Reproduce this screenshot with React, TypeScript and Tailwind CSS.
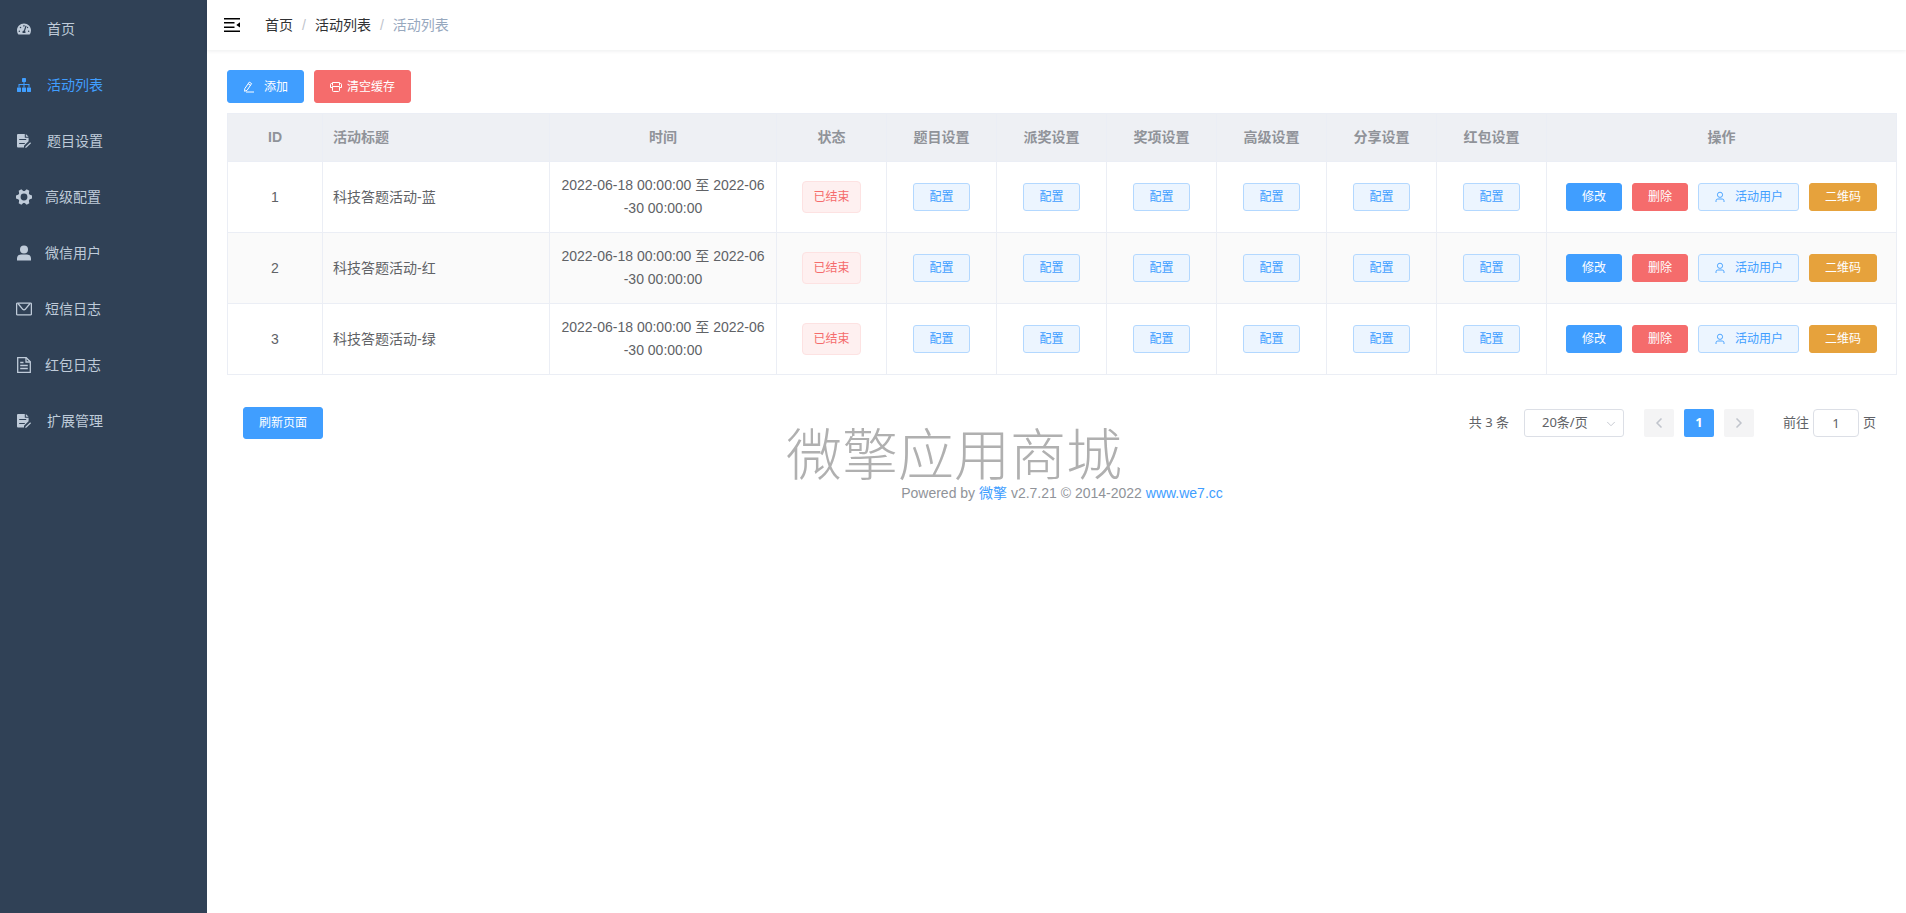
import React from 'react';
import { ChevronDown, ChevronLeft, ChevronRight } from 'lucide-react';
import { FaTachometerAlt } from 'react-icons/fa';

const TreeIcon = () => (
    <svg width="14" height="14" viewBox="0 0 14 14" fill="currentColor">
        <rect x="5" y="0" width="4" height="4" rx="0.4" />
        <path d="M6.500 4h1v2h5v3.500h-1V7h-4v2.500h-1V7h-4v2.500h-1V6h5z" />
        <rect x="0" y="9.500" width="4" height="4.500" rx="0.4" />
        <rect x="5" y="9.500" width="4" height="4.500" rx="0.4" />
        <rect x="10" y="9.500" width="4" height="4.500" rx="0.4" />
    </svg>
);

const FormIcon = () => (
    <svg width="14" height="14" viewBox="0 0 14 14" fill="currentColor">
        <path
            fillRule="evenodd"
            d="M1 0h6.800v3.800h3.800V7.200L7 11.800v1.800H1a1 1 0 0 1-1-1V1a1 1 0 0 1 1-1zM2.200 5v1.100h7V5zM2.200 8.900V10h5.600V8.900z"
        />
        <path d="M8.800 0l2.800 2.800H8.800z" />
        <path d="M13.200 8.300l.8.900-4.400 4.400-1.400.4.300-1.300z" />
    </svg>
);

const GearIcon = () => (
    <svg width="16" height="16" viewBox="0 0 16 16" fill="currentColor">
        <circle cx="8" cy="8" r="4.700" fill="none" stroke="currentColor" strokeWidth="2.600" />
        {[0, 60, 120, 180, 240, 300].map((deg) => (
            <path key={deg} d="M12.500 5.200L16 6.500v3l-3.500 1.300z" transform={`rotate(${deg} 8 8)`} />
        ))}
    </svg>
);

const UserSolidIcon = () => (
    <svg width="14" height="16" viewBox="0 0 14 16" fill="currentColor">
        <circle cx="7" cy="4.500" r="4" />
        <path d="M0 15.500v-2.200a4 4 0 0 1 4-3.800h6a4 4 0 0 1 4 3.800v2.200z" />
    </svg>
);

const MessageIcon = () => (
    <svg width="16" height="14" viewBox="0 0 16 14" fill="none" stroke="currentColor" strokeWidth="1.300">
        <rect x="0.600" y="1.100" width="14.800" height="11.800" rx="1" />
        <path d="M2 1.500l4.800 5.800a1.600 1.600 0 0 0 2.400 0L14 1.500" />
    </svg>
);

const DocumentIcon = () => (
    <svg width="14" height="16" viewBox="0 0 14 16" fill="none" stroke="currentColor" strokeWidth="1.300">
        <path d="M.7.700h8.500l4.100 4.100v10.500H.7z" />
        <path d="M9 .7V5h4.300M3.200 5.500h3.300M3.200 8.500h7.600M3.200 11.500h7.600" />
    </svg>
);

const EditIcon = () => (
    <svg width="12" height="12" viewBox="0 0 12 12" fill="none" stroke="currentColor" strokeWidth="1">
        <path d="M6.300 1.100l2.300 1.500-4.500 6.700-2.500 1 .2-2.700zM5.200 2.800l2.300 1.500M3 11h8" />
    </svg>
);

const ClearIcon = () => (
    <svg width="12" height="12" viewBox="0 0 12 12" fill="none" stroke="currentColor" strokeWidth="1">
        <path d="M2.500 4.500v-3h7v3M2.500 2.500h-1a1 1 0 0 0-1 1v3h2M9.500 2.500h1a1 1 0 0 1 1 1v3h-2" />
        <path d="M2.500 5.500h7v4a1 1 0 0 1-1 1h-5a1 1 0 0 1-1-1z" />
    </svg>
);

const UserIcon = () => (
    <svg width="12" height="12" viewBox="0 0 12 12" fill="none" stroke="currentColor" strokeWidth="0.900">
        <circle cx="6" cy="3.800" r="2.600" />
        <path d="M2 11V9.800A1.800 1.800 0 0 1 3.800 8h4.400A1.800 1.800 0 0 1 10 9.800V11" />
    </svg>
);

const FoldIcon = () => (
    <svg width="16" height="14" viewBox="0 0 16 14" fill="currentColor">
        <path d="M0 0h16v1.500H0zM0 4h10.500v1.500H0zM0 8.400h10.500v1.500H0zM0 12.500h16V14H0zM16 4.200v5.400L12.300 6.900z" />
    </svg>
);

const menu = [
    { label: '首页', icon: <FaTachometerAlt size={14} />, gap: 'gap-[11px]' },
    { label: '活动列表', icon: <TreeIcon />, gap: 'gap-[11px]', active: true },
    { label: '题目设置', icon: <FormIcon />, gap: 'gap-[11px]' },
    { label: '高级配置', icon: <GearIcon />, gap: 'gap-[9px]' },
    { label: '微信用户', icon: <UserSolidIcon />, gap: 'gap-[9px]' },
    { label: '短信日志', icon: <MessageIcon />, gap: 'gap-[9px]' },
    { label: '红包日志', icon: <DocumentIcon />, gap: 'gap-[9px]' },
    { label: '扩展管理', icon: <FormIcon />, gap: 'gap-[11px]' },
];

const settings = ['题目设置', '派奖设置', '奖项设置', '高级设置', '分享设置', '红包设置'];

const rows = [
    { id: 1, title: '科技答题活动-蓝' },
    { id: 2, title: '科技答题活动-红' },
    { id: 3, title: '科技答题活动-绿' },
];

const buttonTypes = {
    primary: 'bg-[#409eff] border-[#409eff] text-white',
    danger: 'bg-[#f56c6c] border-[#f56c6c] text-white',
    warning: 'bg-[#e6a23c] border-[#e6a23c] text-white',
    plain: 'bg-[#ecf5ff] border-[#b3d8ff] text-[#409eff]',
};

interface ButtonProps {
    type: keyof typeof buttonTypes;
    size?: string;
    children: React.ReactNode;
}

function Button({ type, size = 'h-7', children }: ButtonProps) {
    return (
        <button
            type="button"
            className={`inline-flex items-center justify-center border rounded-[3px] px-[15px] text-xs whitespace-nowrap cursor-pointer ${size} ${buttonTypes[type]}`}
        >
            {children}
        </button>
    );
}

function Sidebar() {
    return (
        <aside className="w-[207px] shrink-0 bg-[#304156]">
            <nav className="pt-px">
                {menu.map((item) => (
                    <a
                        key={item.label}
                        href="#"
                        className={`flex items-center h-14 pl-3 text-sm ${item.gap} ${item.active ? 'text-[#409eff]' : 'text-[#bfcbd9]'}`}
                    >
                        <span className="w-6 flex justify-center">{item.icon}</span>
                        <span>{item.label}</span>
                    </a>
                ))}
            </nav>
        </aside>
    );
}

function Navbar() {
    return (
        <header className="flex items-center h-[50px] pl-[17px] shadow-[0_1px_4px_rgba(0,21,41,0.08)]">
            <button type="button" aria-label="收起菜单" className="text-black cursor-pointer">
                <FoldIcon />
            </button>
            <nav className="flex items-center gap-[9px] ml-[25px] text-sm text-[#303133]">
                <a href="#">首页</a>
                <span className="text-[#c0c4cc]">/</span>
                <a href="#">活动列表</a>
                <span className="text-[#c0c4cc]">/</span>
                <span className="text-[#97a8be]">活动列表</span>
            </nav>
        </header>
    );
}

function ActivityTable() {
    const th = 'h-12 px-2.5 border-r border-b border-[#ebeef5] font-bold';
    const td = 'h-[71px] px-2.5 border-r border-b border-[#ebeef5]';

    return (
        <table className="w-full mt-2.5 table-fixed border-separate border-spacing-0 border-l border-t border-[#ebeef5] text-sm leading-[23px] text-center text-[#606266]">
            <colgroup>
                <col className="w-[95px]" />
                <col />
                <col />
                <col className="w-[110px]" />
                {settings.map((name) => (
                    <col key={name} className="w-[110px]" />
                ))}
                <col className="w-[350px]" />
            </colgroup>
            <thead className="bg-[#eef0f4] text-[#909399]">
                <tr>
                    <th className={th}>ID</th>
                    <th className={`${th} text-left`}>活动标题</th>
                    <th className={th}>时间</th>
                    <th className={th}>状态</th>
                    {settings.map((name) => (
                        <th key={name} className={th}>{name}</th>
                    ))}
                    <th className={th}>操作</th>
                </tr>
            </thead>
            <tbody>
                {rows.map((row) => (
                    <tr key={row.id} className="even:bg-[#fafafa]">
                        <td className={td}>{row.id}</td>
                        <td className={`${td} text-left`}>{row.title}</td>
                        <td className={`${td} break-all`}>2022-06-18 00:00:00 至 2022-06-30 00:00:00</td>
                        <td className={td}>
                            <div className="flex justify-center">
                                <span className="h-8 px-2.5 border border-[#fde2e2] rounded bg-[#fef0f0] text-xs leading-[30px] text-[#f56c6c]">
                                    已结束
                                </span>
                            </div>
                        </td>
                        {settings.map((name) => (
                            <td key={name} className={td}>
                                <div className="flex justify-center">
                                    <Button type="plain">配置</Button>
                                </div>
                            </td>
                        ))}
                        <td className={td}>
                            <div className="flex justify-center items-center gap-2.5">
                                <Button type="primary">修改</Button>
                                <Button type="danger">删除</Button>
                                <Button type="plain" size="h-7 gap-[9px]">
                                    <UserIcon /> 活动用户
                                </Button>
                                <Button type="warning">二维码</Button>
                            </div>
                        </td>
                    </tr>
                ))}
            </tbody>
        </table>
    );
}

function Pagination() {
    const pager = 'flex items-center justify-center w-[30px] h-7 rounded-[2px]';

    return (
        <div className="flex items-center text-[13px] text-[#606266] font-['Noto_Sans','Noto_Sans_CJK_SC',sans-serif]">
            <span className="mr-[15px]">共 3 条</span>
            <div className="relative">
                <select
                    aria-label="每页条数"
                    className="appearance-none w-[100px] h-7 pl-[17px] border border-[#dcdfe6] rounded-[3px] bg-white"
                >
                    <option>20条/页</option>
                </select>
                <ChevronDown size={14} strokeWidth={1.5} className="absolute right-[6px] top-2 text-[#c0c4cc] pointer-events-none" />
            </div>
            <div className="flex gap-2.5 ml-5">
                <button type="button" aria-label="上一页" disabled className={`${pager} bg-[#f4f4f5] text-[#c0c4cc]`}>
                    <ChevronLeft size={16} strokeWidth={2.5} />
                </button>
                <button type="button" className={`${pager} bg-[#409eff] text-white font-bold`}>1</button>
                <button type="button" aria-label="下一页" disabled className={`${pager} bg-[#f4f4f5] text-[#c0c4cc]`}>
                    <ChevronRight size={16} strokeWidth={2.5} />
                </button>
            </div>
            <label className="flex items-center gap-1 ml-[29px]">
                前往
                <input type="text" defaultValue="1" className="w-[46px] h-7 border border-[#dcdfe6] rounded text-center bg-white" />
                页
            </label>
        </div>
    );
}

export default function App() {
    return (
        <div className="flex min-h-screen bg-white font-['Liberation_Sans','Noto_Sans_CJK_SC',sans-serif]">
            <Sidebar />
            <div className="flex-1 min-w-0">
                <Navbar />
                <main className="pt-5 pl-5 pr-[9px]">
                    <div className="flex gap-2.5">
                        <Button type="primary" size="h-[33px] gap-[9px]">
                            <EditIcon /> 添加
                        </Button>
                        <Button type="danger" size="h-[33px] gap-[5px]">
                            <ClearIcon /> 清空缓存
                        </Button>
                    </div>

                    <ActivityTable />

                    <div className="flex items-center justify-between mt-8 pl-4 pr-[21px]">
                        <Button type="primary" size="h-8">刷新页面</Button>
                        <Pagination />
                    </div>

                    <footer className="relative mt-11 text-center text-sm text-[#909399]">
                        Powered by <a href="#" className="text-[#409eff]">微擎</a> v2.7.21 © 2014-2022{' '}
                        <a href="#" className="text-[#409eff]">www.we7.cc</a>
                        {/* Watermark */}
                        <span className="absolute left-1/2 bottom-full -mb-px -ml-[276px] text-[56px] leading-[56px] font-light text-[#b0b0b0] whitespace-nowrap pointer-events-none">
                            微擎应用商城
                        </span>
                    </footer>
                </main>
            </div>
        </div>
    );
}
